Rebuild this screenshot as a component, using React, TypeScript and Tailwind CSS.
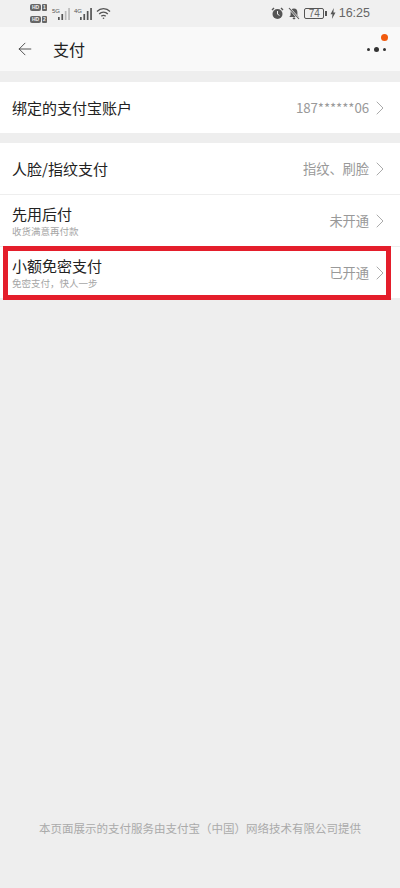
import { ArrowLeft, ChevronRight } from "lucide-react";

const font = { fontFamily: '"Noto Sans CJK SC", "Liberation Sans", sans-serif' };

function Signal({ label, bars }: { label: string; bars: number }) {
  return (
    <div className="relative w-[19px] h-[14px]">
      <span className="absolute left-0 top-0 text-[6px] leading-[8px] text-[#555] font-['Liberation_Sans']">{label}</span>
      <svg width="19" height="14" viewBox="0 0 19 14" className="absolute left-0 top-0">
        {[0, 1, 2, 3].map((i) => (
          <rect key={i} x={6 + i * 3.4} y={10 - i * 3} width="1.7" height={3 + i * 3} fill={i < bars ? "#555" : "#bbb"} />
        ))}
      </svg>
    </div>
  );
}

function SimBadge({ n }: { n: string }) {
  return (
    <div className="flex items-center gap-[1px] h-[7px]">
      <span className="w-[11px] h-[7px] rounded-[2px] bg-[#666] text-[5px] leading-[7px] text-center text-[#eee] font-['Liberation_Sans'] font-bold">HD</span>
      <span className="w-[5px] h-[7px] rounded-[1px] bg-[#666] text-[5px] leading-[7px] text-center text-[#eee] font-['Liberation_Sans'] font-bold">{n}</span>
    </div>
  );
}

function StatusBar() {
  return (
    <div className="h-[27px] bg-[#f0f0f0] flex items-center pl-[30px] pr-[30px] text-[#666]">
      <div className="flex flex-col gap-[5px]">
        <SimBadge n="1" />
        <SimBadge n="2" />
      </div>
      <div className="flex items-center gap-[3px] ml-[5px]">
        <Signal label="5G" bars={2} />
        <Signal label="4G" bars={4} />
      </div>
      <svg width="15" height="13" viewBox="0 0 15 13" fill="none" stroke="#555" strokeWidth="1.3" className="ml-[3px]">
        <path d="M1 4.5a9 9 0 0 1 13 0" />
        <path d="M3.2 7a6 6 0 0 1 8.6 0" />
        <path d="M5.3 9.3a3 3 0 0 1 4.4 0" />
        <circle cx="7.5" cy="11.3" r="0.8" fill="#555" stroke="none" />
      </svg>
      <div className="flex-1" />
      <svg width="13" height="13" viewBox="0 0 13 13" className="mr-[4px]">
        <circle cx="6.5" cy="7" r="5" fill="#555" />
        <path d="M1 3l2-2M12 3l-2-2" stroke="#555" strokeWidth="1.4" />
        <path d="M6.5 4v3.2l2 1.2" stroke="#f0f0f0" strokeWidth="1" fill="none" />
      </svg>
      <svg width="12" height="13" viewBox="0 0 12 13" className="mr-[4px]">
        <path d="M6 1.5c-2.3 0-3.4 1.7-3.4 3.8v2.9L1.3 10h9.4L9.4 8.2V5.3C9.4 3.2 8.3 1.5 6 1.5z" fill="#555" />
        <rect x="4.7" y="10.6" width="2.6" height="1.6" rx="0.8" fill="#555" />
        <path d="M1 1l10 11" stroke="#f0f0f0" strokeWidth="2.2" />
        <path d="M1 1l10 11" stroke="#555" strokeWidth="1.1" />
      </svg>
      <div className="w-[20px] h-[11px] border border-[#555] rounded-[2px] text-[10px] leading-[9px] text-center font-['Liberation_Sans']">74</div>
      <div className="w-[1.5px] h-[5px] bg-[#555] ml-[1px]" />
      <svg width="6" height="11" viewBox="0 0 6 11" className="ml-[3px] mr-[3px]">
        <path d="M3.8 0L0.5 6.2h2L1.9 11l3.6-6.6H3.4z" fill="#555" />
      </svg>
      <span className="text-[12.5px] leading-none font-['Liberation_Sans']">16:25</span>
    </div>
  );
}

function Header() {
  return (
    <div className="relative h-[44px] bg-[#f9f9f9] flex items-center pl-[15px]">
      <ArrowLeft size={20} strokeWidth={1} className="text-[#333]" />
      <span className="ml-[18px] text-[16px] text-[#222]">支付</span>
      <div className="absolute right-[14px] top-[20px] flex items-center gap-[4px]">
        <span className="w-[3px] h-[3px] rounded-full bg-[#333]" />
        <span className="w-[5px] h-[5px] rounded-full bg-[#333]" />
        <span className="w-[3px] h-[3px] rounded-full bg-[#333]" />
      </div>
      <span className="absolute right-[12px] top-[7px] w-[7px] h-[7px] rounded-full bg-[#f15a0e]" />
    </div>
  );
}

function Row({ title, sub, value, highlighted }: { title: string; sub?: string; value: string; highlighted?: boolean }) {
  return (
    <div className="relative h-[51px] bg-white flex items-center pl-[12px] pr-[8px]">
      <div className="flex-1 min-w-0">
        <p className="text-[15px] leading-[19px] text-[#222]">{title}</p>
        {sub && <p className="mt-[3px] text-[9.5px] leading-[11px] text-[#a5a5a5]">{sub}</p>}
      </div>
      <span className="text-[13.3px] tracking-[-0.1px] text-[#999]">{value}</span>
      <ChevronRight size={24} strokeWidth={1} className="text-[#aaa] -ml-[1px]" />
      {highlighted && <div className="absolute left-[3px] -top-px w-[388px] h-[54px] border-[5px] border-[#e41e2b]" />}
    </div>
  );
}

export default function App() {
  return (
    <div className="w-[400px] h-[888px] bg-[#eeeeee] flex flex-col" style={font}>
      <StatusBar />
      <Header />
      <div className="mt-[11px]">
        <Row title="绑定的支付宝账户" value="187******06" />
      </div>
      <div className="mt-[10px] flex flex-col gap-[1px]">
        <Row title="人脸/指纹支付" value="指纹、刷脸" />
        <Row title="先用后付" sub="收货满意再付款" value="未开通" />
        <Row title="小额免密支付" sub="免密支付，快人一步" value="已开通" highlighted />
      </div>
      <p className="mt-auto mb-[52px] text-center text-[11.5px] leading-[16px] text-[#aaa]">
        本页面展示的支付服务由支付宝（中国）网络技术有限公司提供
      </p>
    </div>
  );
}
